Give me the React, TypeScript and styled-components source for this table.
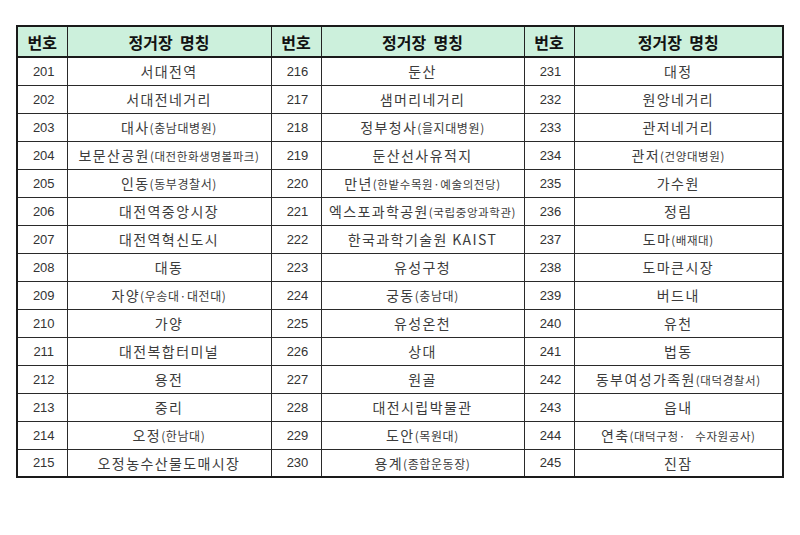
import styled, { createGlobalStyle } from "styled-components";

const GlobalStyle = createGlobalStyle`
  body {
    margin: 0;
    background-color: #ffffff;
  }
`;

interface IStation {
  no: number;
  name: string;
  sub?: string;
  small?: boolean;
}

const stations: IStation[] = [
  { no: 201, name: "서대전역" },
  { no: 202, name: "서대전네거리" },
  { no: 203, name: "대사", sub: "(충남대병원)" },
  { no: 204, name: "보문산공원", sub: "(대전한화생명볼파크)", small: true },
  { no: 205, name: "인동", sub: "(동부경찰서)" },
  { no: 206, name: "대전역중앙시장" },
  { no: 207, name: "대전역혁신도시" },
  { no: 208, name: "대동" },
  { no: 209, name: "자양", sub: "(우송대·대전대)" },
  { no: 210, name: "가양" },
  { no: 211, name: "대전복합터미널" },
  { no: 212, name: "용전" },
  { no: 213, name: "중리" },
  { no: 214, name: "오정", sub: "(한남대)" },
  { no: 215, name: "오정농수산물도매시장" },
  { no: 216, name: "둔산" },
  { no: 217, name: "샘머리네거리" },
  { no: 218, name: "정부청사", sub: "(을지대병원)" },
  { no: 219, name: "둔산선사유적지" },
  { no: 220, name: "만년", sub: "(한밭수목원·예술의전당)", small: true },
  { no: 221, name: "엑스포과학공원", sub: "(국립중앙과학관)", small: true },
  { no: 222, name: "한국과학기술원 KAIST" },
  { no: 223, name: "유성구청" },
  { no: 224, name: "궁동", sub: "(충남대)" },
  { no: 225, name: "유성온천" },
  { no: 226, name: "상대" },
  { no: 227, name: "원골" },
  { no: 228, name: "대전시립박물관" },
  { no: 229, name: "도안", sub: "(목원대)" },
  { no: 230, name: "용계", sub: "(종합운동장)" },
  { no: 231, name: "대정" },
  { no: 232, name: "원앙네거리" },
  { no: 233, name: "관저네거리" },
  { no: 234, name: "관저", sub: "(건양대병원)", small: true },
  { no: 235, name: "가수원" },
  { no: 236, name: "정림" },
  { no: 237, name: "도마", sub: "(배재대)", small: true },
  { no: 238, name: "도마큰시장" },
  { no: 239, name: "버드내" },
  { no: 240, name: "유천" },
  { no: 241, name: "법동" },
  { no: 242, name: "동부여성가족원", sub: "(대덕경찰서)", small: true },
  { no: 243, name: "읍내" },
  { no: 244, name: "연축", sub: "(대덕구청·\u00a0\u00a0\u00a0수자원공사)", small: true },
  { no: 245, name: "진잠" },
];

const Page = styled.div`
  padding: 25px 18px 0 16px;
`;

const Table = styled.table`
  border-collapse: collapse;
  table-layout: fixed;
  width: 766px;
  border: 2px solid #1a1a1a;
`;

const Col = styled.col<{ w: number }>`
  width: ${(props) => props.w}px;
`;

const HeadRow = styled.tr`
  height: 31px;
  background-color: #ccf0dc;
`;

const HeadCell = styled.th`
  border: 1px solid #222;
  border-bottom: 2px solid #1a1a1a;
  padding: 0;
  font-family: "Noto Sans CJK KR", "Noto Sans", sans-serif;
  font-size: 16px;
  font-weight: 700;
  color: #111;
  text-align: center;
  vertical-align: middle;
`;

const Row = styled.tr`
  height: 28px;
`;

const NoCell = styled.td`
  border: 1px solid #2a2a2a;
  padding: 0 0 0 3px;
  font-family: "Liberation Sans", Arial, sans-serif;
  font-size: 13px;
  color: #333;
  text-align: center;
  vertical-align: middle;
`;

const NameCell = styled.td`
  border: 1px solid #2a2a2a;
  padding: 0;
  font-family: "Noto Sans CJK KR", sans-serif;
  font-size: 14px;
  color: #3c3c3c;
  text-align: center;
  vertical-align: middle;
  white-space: nowrap;
  letter-spacing: 1.4px;
`;

const Sub = styled.span<{ small?: boolean }>`
  font-size: ${(props) => (props.small ? "11.5px" : "12px")};
  letter-spacing: ${(props) => (props.small ? "0.6px" : "0.6px")};
`;

function Name({ station }: { station: IStation }) {
  return (
    <NameCell>
      {station.name}
      {station.sub && <Sub small={station.small}>{station.sub}</Sub>}
    </NameCell>
  );
}

function App() {
  const rows = Array.from({ length: 15 }, (_, i) => [
    stations[i],
    stations[i + 15],
    stations[i + 30],
  ]);
  return (
    <>
      <GlobalStyle />
      <Page>
        <Table>
          <colgroup>
            <Col w={50} />
            <Col w={204} />
            <Col w={50} />
            <Col w={203} />
            <Col w={50} />
            <Col w={209} />
          </colgroup>
          <thead>
            <HeadRow>
              {[0, 1, 2].map((i) => [
                <HeadCell key={`n${i}`}>번호</HeadCell>,
                <HeadCell key={`s${i}`}>정거장&nbsp;&nbsp;명칭</HeadCell>,
              ])}
            </HeadRow>
          </thead>
          <tbody>
            {rows.map((group) => (
              <Row key={group[0].no}>
                {group.map((station) => [
                  <NoCell key={`n${station.no}`}>{station.no}</NoCell>,
                  <Name key={`s${station.no}`} station={station} />,
                ])}
              </Row>
            ))}
          </tbody>
        </Table>
      </Page>
    </>
  );
}

export default App;
